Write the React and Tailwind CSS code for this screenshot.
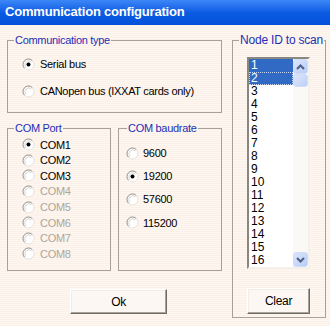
import React from "react";

function Radio({ checked }) {
  return (
    <svg width="13" height="13" viewBox="0 0 13 13" className="shrink-0">
      <circle cx="6.5" cy="6.5" r="5.5" fill="#FFFFFF" />
      <path d="M2.61 10.39 A5.5 5.5 0 0 1 10.39 2.61" fill="none" stroke="#8C8984" strokeWidth="1" />
      <path d="M10.39 2.61 A5.5 5.5 0 0 1 2.61 10.39" fill="none" stroke="#E6E2DC" strokeWidth="1" />
      <path d="M3.7 9.3 A4 4 0 0 1 9.3 3.7" fill="none" stroke="#D8D4CE" strokeWidth="1" />
      {checked && <circle cx="6.5" cy="6.5" r="2" fill="#000000" />}
    </svg>
  );
}

function Group({ label, className, legendClass = "ml-[6px]", children }) {
  return (
    <fieldset className={`border border-solid border-[#A8A19B] ${className}`}>
      <legend className={`${legendClass} px-[1px] leading-[13px] text-[#1E2FB5]`}>{label}</legend>
      {children}
    </fieldset>
  );
}

function Btn({ children, className }) {
  return (
    <div
      className={`flex items-center justify-center bg-[#FCF7F2] border border-solid border-t-[#FFFFFF] border-l-[#FFFFFF] border-r-[#6E6A64] border-b-[#6E6A64] shadow-[inset_-1px_-1px_0_#A8A29B,inset_1px_1px_0_#F2ECE6] text-[12px] ${className}`}
    >
      {children}
    </div>
  );
}

export default function App() {
  const ports = ["COM1", "COM2", "COM3", "COM4", "COM5", "COM6", "COM7", "COM8"];
  const bauds = ["9600", "19200", "57600", "115200"];
  const ids = Array.from({ length: 16 }, (_, i) => i + 1);
  return (
    <div className="w-[330px] h-[326px] overflow-hidden font-['Liberation_Sans',Arial,sans-serif] text-[11px] tracking-[-0.3px] text-black">
      <div className="h-[25px] flex items-center pl-[5px] pb-[1px] bg-gradient-to-b from-[#3C87F6] via-[#0B5BE3] to-[#0551DA] text-white font-bold text-[13px] tracking-[-0.2px]">
        Communication configuration
      </div>
      <div className="h-[301px] flex pl-[7px] pt-[9px] gap-[10px] bg-[repeating-linear-gradient(0deg,#FBF1E9_0px,#FBF1E9_1px,#FDF6F1_1px,#FDF6F1_2px)]">
        <div className="w-[215px] flex flex-col">
          <Group label="Communication type" className="h-[79px]">
            <div className="flex flex-col pl-[14px]">
              <div className="mt-[11px] h-[13px] flex items-center gap-[5px]">
                <Radio checked />
                <span>Serial bus</span>
              </div>
              <div className="mt-[14px] h-[13px] flex items-center gap-[5px]">
                <Radio />
                <span>CANopen bus (IXXAT cards only)</span>
              </div>
            </div>
          </Group>
          <div className="mt-[9px] flex gap-[7px]">
            <Group label="COM Port" className="w-[104px] h-[149px]">
              <div className="flex flex-col pl-[14px] mt-[2px]">
                {ports.map((p, i) => (
                  <div key={p} className="h-[15.6px] flex items-center gap-[5px]">
                    <Radio checked={i === 0} />
                    <span className={i > 2 ? "text-[#ACA899]" : ""}>{p}</span>
                  </div>
                ))}
              </div>
            </Group>
            <Group label="COM baudrate" legendClass="ml-[8px]" className="w-[104px] h-[149px]">
              <div className="flex flex-col pl-[7px] mt-[11.5px] gap-[10.3px]">
                {bauds.map((b, i) => (
                  <div key={b} className="h-[13px] flex items-center gap-[4px]">
                    <Radio checked={i === 1} />
                    <span>{b}</span>
                  </div>
                ))}
              </div>
            </Group>
          </div>
          <Btn className="mt-[18px] ml-[63px] w-[97px] h-[25px]">Ok</Btn>
        </div>
        <Group label="Node ID to scan" legendClass="ml-[6px] text-[12px] tracking-[-0.2px]" className="w-[94px] h-[284px]">
          <div className="flex flex-col ml-[14px]">
            <div className="mt-[10px] w-[63px] h-[212px] flex border-2 border-solid border-t-[#8A8680] border-l-[#8A8680] border-r-[#F4F0EC] border-b-[#F4F0EC] bg-white">
              <div className="w-[44px] flex flex-col tracking-normal">
                {ids.map((n) => (
                  <div
                    key={n}
                    className={`h-[13px] leading-[13px] text-[12px] pl-[2px] ${
                      n <= 2 ? "bg-[#316AC5] text-white" : ""
                    } ${n === 2 ? "outline outline-1 outline-dotted outline-[#C8D6F0] -outline-offset-1" : ""}`}
                  >
                    {n}
                  </div>
                ))}
              </div>
              <div className="w-[15px] flex flex-col justify-between bg-[#FAF9F6]">
                <div className="flex flex-col">
                  <div className="h-[15px] rounded-[3px] border border-solid border-[#D0DCF8] bg-gradient-to-br from-[#DCE6FD] to-[#B8CCF6] flex items-center justify-center">
                    <svg width="9" height="6" viewBox="0 0 9 6">
                      <path d="M1 5 L4.5 1.5 L8 5" fill="none" stroke="#4D6185" strokeWidth="2" />
                    </svg>
                  </div>
                  <div className="h-[13px] rounded-[3px] border border-solid border-[#D0DCF8] bg-gradient-to-br from-[#DCE6FD] to-[#BFD0F7]" />
                </div>
                <div className="h-[15px] rounded-[3px] border border-solid border-[#D0DCF8] bg-gradient-to-br from-[#DCE6FD] to-[#B8CCF6] flex items-center justify-center">
                  <svg width="9" height="6" viewBox="0 0 9 6">
                    <path d="M1 1 L4.5 4.5 L8 1" fill="none" stroke="#4D6185" strokeWidth="2" />
                  </svg>
                </div>
              </div>
            </div>
            <Btn className="mt-[19px] w-[63px] h-[26px]">Clear</Btn>
          </div>
        </Group>
      </div>
    </div>
  );
}
